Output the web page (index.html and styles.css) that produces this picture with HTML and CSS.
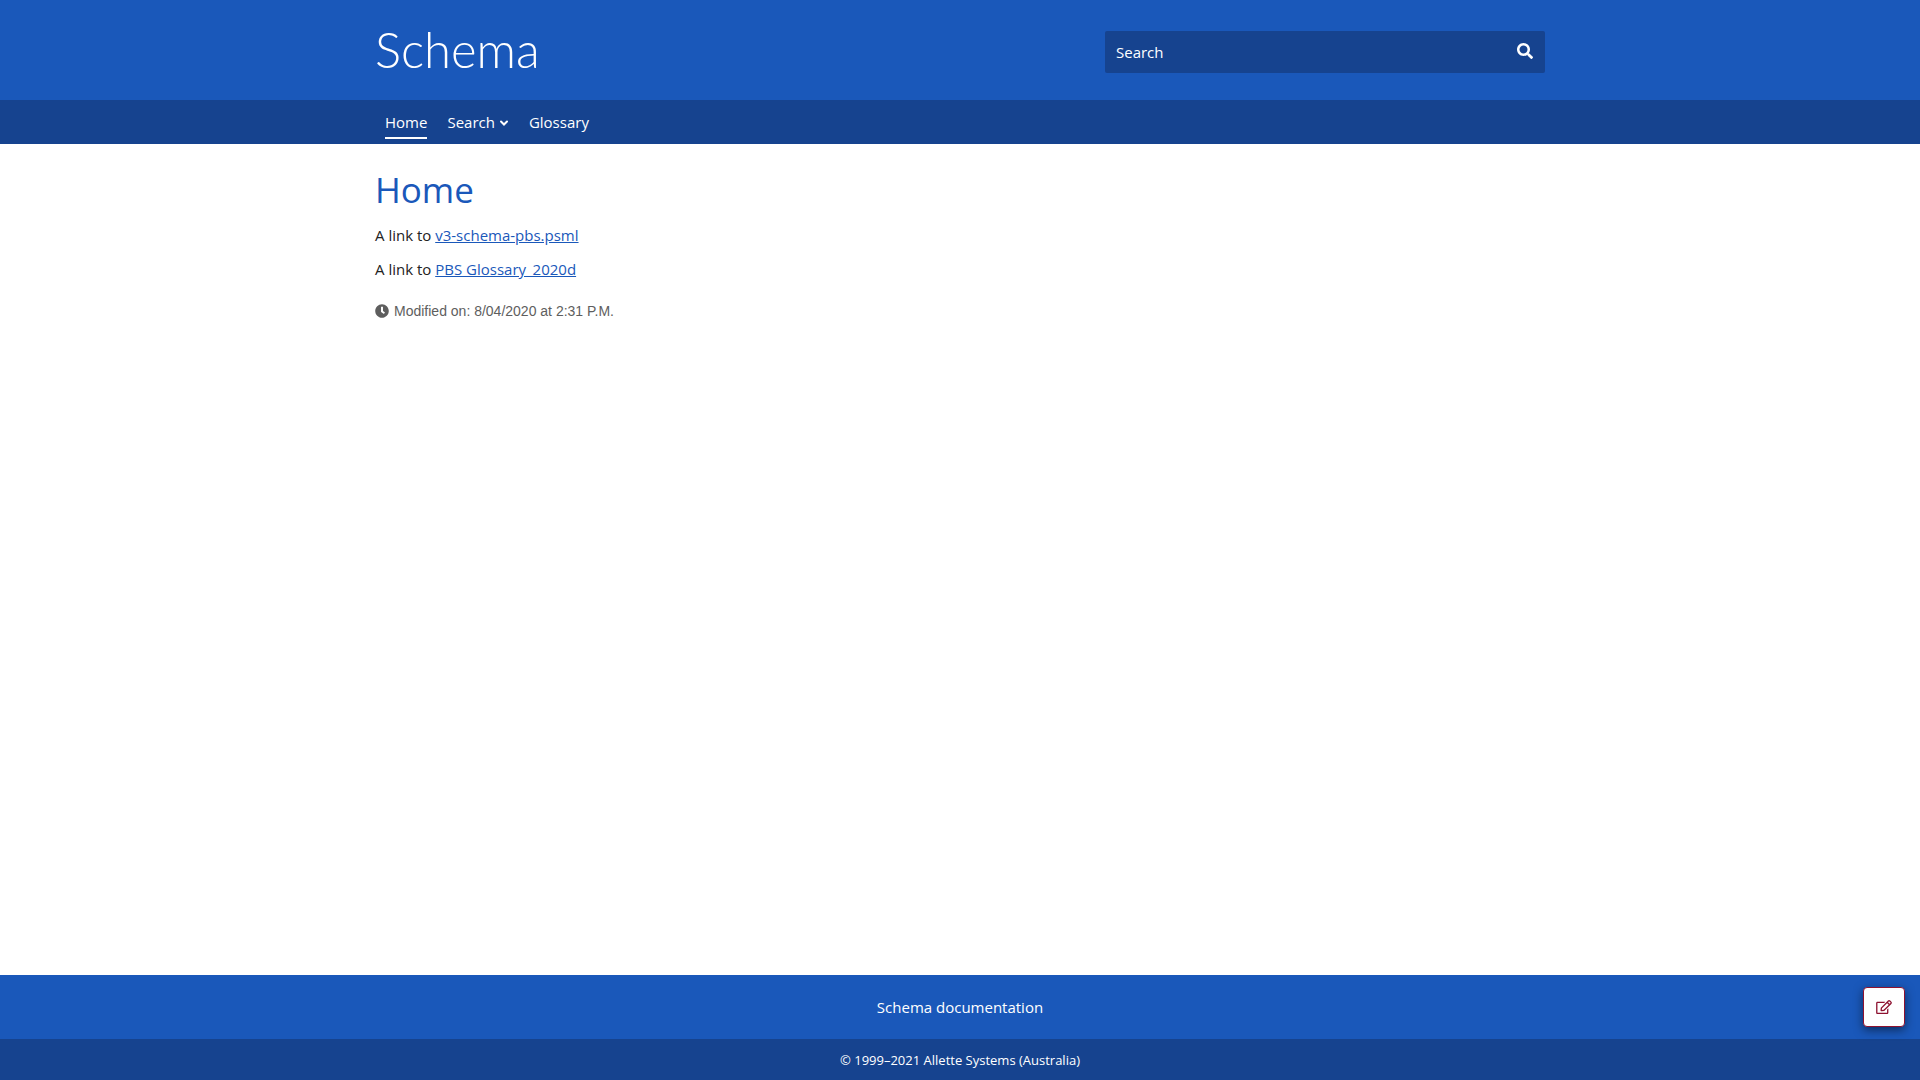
FILE: index.html
```html
<!DOCTYPE html>
<html lang="en">
<head>
<meta charset="utf-8">
<meta name="viewport" content="width=device-width, initial-scale=1">
<title>Home - Schema</title>
<link rel="stylesheet" href="styles.css">
</head>
<body>
<header class="header">
  <div class="container header-inner">
    <a class="logo" href="#">Schema</a>
    <form class="search" role="search">
      <input class="search-input" type="text" aria-label="Search" placeholder="Search">
      <button class="search-button" type="submit" aria-label="Submit search">
        <svg viewBox="0 0 512 512" width="16" height="16" fill="currentColor" aria-hidden="true"><path d="M505 442.700 405.300 343c-4.500-4.500-10.600-7-17-7H372c27.600-35.300 44-79.700 44-128C416 93.100 322.900 0 208 0S0 93.100 0 208s93.100 208 208 208c48.300 0 92.700-16.400 128-44v16.300c0 6.400 2.500 12.500 7 17l99.700 99.700c9.400 9.400 24.600 9.400 33.900 0l28.300-28.300c9.400-9.400 9.400-24.600.1-34zM208 336c-70.700 0-128-57.200-128-128 0-70.700 57.200-128 128-128 70.700 0 128 57.200 128 128 0 70.700-57.200 128-128 128z"/></svg>
      </button>
    </form>
  </div>
</header>
<nav class="nav" aria-label="Main">
  <ul class="container nav-list">
    <li><a class="nav-link nav-link-active" href="#" aria-current="page">Home</a></li>
    <li><a class="nav-link" href="#">Search
      <svg viewBox="0 0 10 8" width="10" height="8" fill="none" stroke="currentColor" stroke-width="2" stroke-linecap="round" aria-hidden="true"><path d="M2 3.500l3 3 3-3"/></svg></a></li>
    <li><a class="nav-link" href="#">Glossary</a></li>
  </ul>
</nav>
<main class="container main">
  <h1 class="title">Home</h1>
  <p class="text">A link to <a class="link" href="#">v3-schema-pbs.psml</a></p>
  <p class="text">A link to <a class="link" href="#">PBS Glossary_2020d</a></p>
  <p class="modified">
    <svg viewBox="0 0 512 512" width="14" height="14" fill="currentColor" aria-hidden="true"><path d="M256 8C119 8 8 119 8 256s111 248 248 248 248-111 248-248S393 8 256 8zm57.100 350.100L224.900 294c-3.100-2.300-4.900-5.900-4.900-9.700V116c0-6.600 5.400-12 12-12h48c6.600 0 12 5.400 12 12v137.700l63.500 46.200c5.400 3.900 6.500 11.400 2.600 16.800l-28.200 38.800c-3.900 5.300-11.400 6.500-16.800 2.600z"/></svg>
    <span>Modified on: 8/04/2020 at 2:31 P.M.</span>
  </p>
</main>
<footer>
  <div class="footer-title">Schema documentation</div>
  <div class="footer-legal">© 1999–2021 Allette Systems (Australia)</div>
</footer>
<button class="edit" type="button" aria-label="Edit page">
  <svg viewBox="0 0 576 512" width="16" height="14" fill="currentColor" aria-hidden="true"><path d="M402.300 344.900l32-32c5-5 13.700-1.500 13.700 5.700V464c0 26.500-21.500 48-48 48H48c-26.500 0-48-21.500-48-48V112c0-26.500 21.500-48 48-48h273.500c7.100 0 10.700 8.600 5.700 13.700l-32 32c-1.500 1.500-3.500 2.300-5.700 2.300H48v352h352V350.500c0-2.100.8-4.100 2.300-5.600zm156.600-201.800L296.300 405.700l-90.400 10c-26.200 2.900-48.500-19.200-45.600-45.600l10-90.400L432.900 17.100c22.900-22.900 59.900-22.900 82.700 0l43.200 43.200c22.900 22.900 22.900 60 .1 82.800zM460.100 174 402 115.900 216.200 301.800l-7.300 65.300 65.300-7.300L460.100 174zm64.800-79.700-43.200-43.200c-4.100-4.100-10.800-4.100-14.800 0L436 82l58.100 58.100 30.900-30.900c4-4.200 4-10.800-.1-14.900z"/></svg>
</button>
</body>
</html>
```
FILE: styles.css
```css
* {
  box-sizing: border-box;
}

body {
  display: flex;
  flex-direction: column;
  min-height: 100vh;
  margin: 0;
  background: #fff;
  color: #222;
  font: 15px/24px "Open Sans", "Noto Sans", sans-serif;
}

.container {
  width: 100%;
  max-width: 1170px;
  margin: 0 auto;
}

.header {
  background: #1a58ba;
}

.header-inner {
  display: flex;
  align-items: flex-start;
  justify-content: space-between;
  min-height: 100px;
  padding-top: 19px;
}

.logo {
  color: #fff;
  font-family: Lato, sans-serif;
  font-size: 49px;
  font-weight: 300;
  line-height: 60px;
  text-decoration: none;
}

.search {
  display: flex;
  width: 440px;
  height: 42px;
  margin-top: 12px;
  border-radius: 2px;
  background: #16438f;
}

.search-input {
  flex: 1;
  min-width: 0;
  padding: 0 11px;
  border: 0;
  background: transparent;
  color: #fff;
  font: inherit;
}

.search-input::placeholder {
  color: #fff;
  opacity: 1;
}

.search-button {
  display: flex;
  padding: 12px;
  border: 0;
  background: transparent;
  color: #fff;
}

.nav {
  background: #16438f;
}

.nav-list {
  display: flex;
  gap: 20px;
  padding: 10px 10px 5px;
  list-style: none;
}

.nav-link {
  display: flex;
  align-items: center;
  gap: 4px;
  padding-bottom: 3px;
  border-bottom: 2px solid transparent;
  color: #fff;
  text-decoration: none;
}

.nav-link-active {
  border-color: #fff;
}

.main {
  flex: 1;
  padding-top: 22px;
}

.title {
  margin: 0 0 9px;
  color: #1a58ba;
  font-size: 35px;
  font-weight: 400;
  line-height: 48px;
}

.text {
  margin: 0 0 10px;
}

.link {
  color: #1a58ba;
}

.modified {
  display: flex;
  align-items: center;
  gap: 5px;
  margin: 18px 0;
  color: #5e5e5e;
  font: 14px/24px "Liberation Sans", Arial, sans-serif;
}

.footer-title {
  padding: 20px;
  background: #1a58ba;
  color: #fff;
  text-align: center;
}

.footer-legal {
  padding: 9px 20px 8px;
  background: #16438f;
  color: #fff;
  font-size: 13px;
  text-align: center;
}

.edit {
  position: fixed;
  right: 15px;
  bottom: 53px;
  display: flex;
  align-items: center;
  justify-content: center;
  width: 42px;
  height: 40px;
  border: 1px solid #8e1230;
  border-radius: 4px;
  background: #fff;
  color: #8e1230;
  box-shadow: 0 3px 10px rgba(0, 0, 0, 0.5);
}
```
